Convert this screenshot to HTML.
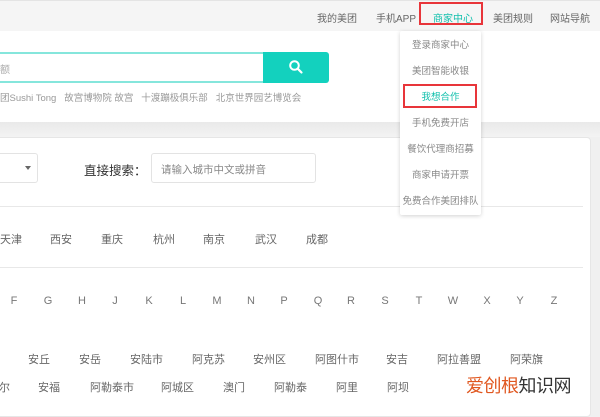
<!DOCTYPE html>
<html><head><meta charset="utf-8"><style>
*{margin:0;padding:0;box-sizing:border-box}
body{width:600px;height:405px;overflow:hidden;background:#f0f0f0;font-family:"Liberation Sans","Noto Sans CJK SC",sans-serif;position:relative}
.a{position:absolute;white-space:nowrap}
.top{left:0;top:0;width:600px;height:31px;background:#f5f5f5;border-top:1px solid #e4e4e4}
.nav{top:10px;font-size:10px;color:#666}
.hdr{left:0;top:31px;width:600px;height:91px;background:#fff}
.card{left:-10px;top:137px;width:601px;height:280px;background:#fff;border:1px solid #e6e6e6;border-radius:4px}
.c{font-size:11px;color:#666;top:0}
.l{font-size:11px;color:#777;top:295px;width:14px;text-align:center}
.dd{left:400px;top:31px;width:81px;height:184px;background:#fff;box-shadow:0 1px 4px rgba(0,0,0,.18);border-radius:2px}
.di{left:400px;width:81px;text-align:center;font-size:9.5px;color:#888}
</style></head><body>
<div class="a top"></div>
<div class="a nav" style="left:317px">我的美团</div>
<div class="a nav" style="left:376px">手机APP</div>
<div class="a nav" style="left:433px;color:#13c0ad">商家中心</div>
<div class="a nav" style="left:493px">美团规则</div>
<div class="a nav" style="left:550px">网站导航</div>
<div class="a" style="left:419px;top:2px;width:64px;height:23px;border:2px solid #e8353a"></div>
<div class="a hdr"></div>
<div class="a" style="left:-4px;top:52px;width:268px;height:31px;border:2px solid #85e6dc;border-right:none;background:#fff"></div>
<div class="a" style="left:0;top:61px;font-size:10px;color:#aaa">额</div>
<div class="a" style="left:263px;top:52px;width:66px;height:31px;background:#13d1be;border-radius:0 3px 3px 0"></div>
<svg class="a" style="left:288px;top:59px" width="16" height="16" viewBox="0 0 16 16"><circle cx="6.5" cy="6.5" r="4.3" fill="none" stroke="#fff" stroke-width="2"/><path d="M9.7 9.7L13.5 13.5" stroke="#fff" stroke-width="2.2" stroke-linecap="round"/></svg>
<div class="a" style="left:0;top:90px;font-size:9.5px;color:#999">团Sushi Tong&nbsp;&nbsp; 故宫博物院 故宫&nbsp;&nbsp; 十渡蹦极俱乐部&nbsp;&nbsp; 北京世界园艺博览会</div>
<div class="a" style="left:0;top:122px;width:600px;height:15px;background:linear-gradient(#e9e9e9,#f3f3f3)"></div>
<div class="a card"></div>
<div class="a" style="left:-5px;top:153px;width:43px;height:30px;border:1px solid #e3e3e3;border-radius:3px;background:#fff"></div>
<div class="a" style="left:25px;top:166px;width:0;height:0;border-left:3px solid transparent;border-right:3px solid transparent;border-top:4px solid #666"></div>
<div class="a" style="left:84px;top:160px;font-size:12.5px;color:#333">直接搜索：</div>
<div class="a" style="left:151px;top:153px;width:165px;height:30px;border:1px solid #e3e3e3;border-radius:3px;background:#fff"></div>
<div class="a" style="left:161px;top:162px;font-size:10.5px;color:#888">请输入城市中文或拼音</div>
<div class="a" style="left:0;top:206px;width:583px;height:1px;background:#e8e8e8"></div>
<div class="a" style="left:0;top:267px;width:583px;height:1px;background:#e8e8e8"></div>
<div class="a" style="top:231px;left:0;width:600px;height:16px">
<span class="a c" style="left:0">天津</span><span class="a c" style="left:50px">西安</span><span class="a c" style="left:101px">重庆</span><span class="a c" style="left:153px">杭州</span><span class="a c" style="left:203px">南京</span><span class="a c" style="left:255px">武汉</span><span class="a c" style="left:306px">成都</span></div>
<div class="a l" style="left:7px">F</div><div class="a l" style="left:41px">G</div><div class="a l" style="left:75px">H</div><div class="a l" style="left:108px">J</div><div class="a l" style="left:142px">K</div><div class="a l" style="left:176px">L</div><div class="a l" style="left:210px">M</div><div class="a l" style="left:244px">N</div><div class="a l" style="left:277px">P</div><div class="a l" style="left:311px">Q</div><div class="a l" style="left:344px">R</div><div class="a l" style="left:378px">S</div><div class="a l" style="left:412px">T</div><div class="a l" style="left:446px">W</div><div class="a l" style="left:480px">X</div><div class="a l" style="left:513px">Y</div><div class="a l" style="left:547px">Z</div>
<div class="a" style="top:351px;left:0;width:600px;height:16px">
<span class="a c" style="left:28px">安丘</span><span class="a c" style="left:79px">安岳</span><span class="a c" style="left:130px">安陆市</span><span class="a c" style="left:192px">阿克苏</span><span class="a c" style="left:253px">安州区</span><span class="a c" style="left:315px">阿图什市</span><span class="a c" style="left:386px">安吉</span><span class="a c" style="left:437px">阿拉善盟</span><span class="a c" style="left:510px">阿荣旗</span></div>
<div class="a" style="top:379px;left:0;width:600px;height:16px">
<span class="a c" style="left:-1px">尔</span><span class="a c" style="left:38px">安福</span><span class="a c" style="left:90px">阿勒泰市</span><span class="a c" style="left:161px">阿城区</span><span class="a c" style="left:223px">澳门</span><span class="a c" style="left:274px">阿勒泰</span><span class="a c" style="left:336px">阿里</span><span class="a c" style="left:387px">阿坝</span></div>
<div class="a" style="left:466px;top:372px;font-size:18px;color:#333;letter-spacing:-0.5px"><span style="color:#e0571f">爱创根</span>知识网</div>
<div class="a dd"></div>
<div class="a di" style="top:37px">登录商家中心</div>
<div class="a di" style="top:63px">美团智能收银</div>
<div class="a di" style="top:89px;color:#13c0ad">我想合作</div>
<div class="a" style="left:403px;top:84px;width:74px;height:24px;border:2px solid #e8353a"></div>
<div class="a di" style="top:115px">手机免费开店</div>
<div class="a di" style="top:141px">餐饮代理商招募</div>
<div class="a di" style="top:167px">商家申请开票</div>
<div class="a di" style="top:193px">免费合作美团排队</div>
</body></html>
